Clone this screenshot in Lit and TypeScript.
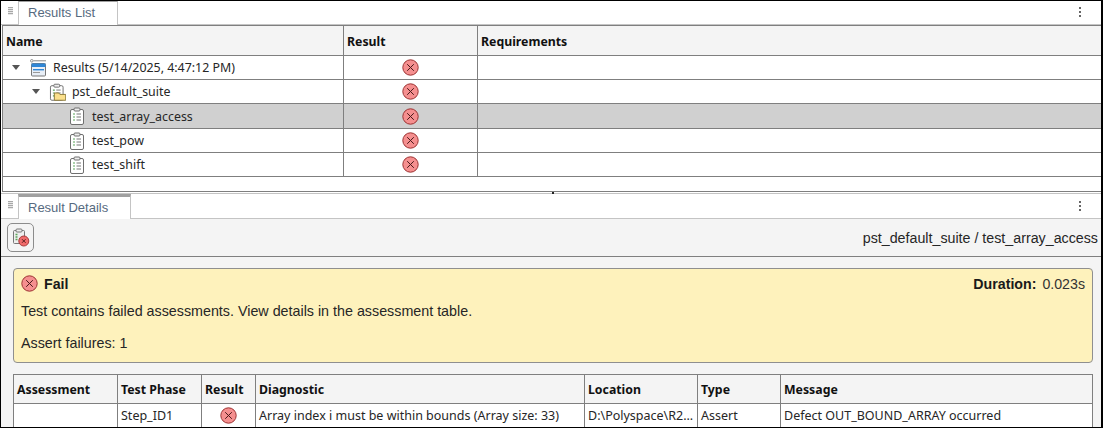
import { LitElement, html, css, svg } from "lit";
import { customElement } from "lit/decorators.js";

const errIcon = (size = 17) => html`<svg class="ic" width=${size} height=${size} viewBox="0 0 17 17">
  <circle cx="8.5" cy="8.5" r="7.7" fill="#f58f8f" stroke="#9c3232" stroke-width="1"/>
  <path d="M5.2 5.2l6.600 6.600M11.800 5.200l-6.600 6.600" stroke="#4a1a1a" stroke-width="1" fill="none"/>
</svg>`;

const clipBody = svg`
  <rect x="1.5" y="2.5" width="13" height="15" rx="1.5" fill="#fff" stroke="#6f6f6f" stroke-width="1"/>
  <rect x="5" y="1" width="6" height="3" rx="1" fill="#eee" stroke="#6f6f6f" stroke-width="1"/>
  <path d="M4 7h2M4 10h2M4 13h2" stroke="#5aa55a" stroke-width="1.2"/>
  <path d="M7.5 7h4.5M7.5 10h4.5M7.5 13h4.5" stroke="#777" stroke-width="1"/>`;

const testIcon = html`<svg class="ic" width="16" height="18" viewBox="0 0 16 18">${clipBody}</svg>`;

const suiteIcon = html`<svg class="ic" width="17" height="18" viewBox="0 0 17.500 18">
  ${clipBody}
  <path d="M5.500 17.500v-7.500h4.500l1.200 1.500h6v6z" fill="#fbe08c" stroke="#8a7a3a" stroke-width="1"/>
</svg>`;

const resultsIcon = html`<svg class="ic" width="17" height="18" viewBox="0 0 17 18">
  <circle cx="1.800" cy="1.800" r="1.300" fill="none" stroke="#777" stroke-width=".8"/>
  <path d="M3.500 1.800h12.500" stroke="#888" stroke-width="1"/>
  <rect x="1.500" y="4.500" width="14" height="12.500" rx="1" fill="#e8eef6" stroke="#777" stroke-width="1"/>
  <rect x="1.500" y="4.500" width="14" height="3.500" fill="#2f86d6"/>
  <rect x="3" y="10" width="11" height="1.400" fill="#2f86d6"/>
  <path d="M3 13.500h7" stroke="#999" stroke-width="1"/>
</svg>`;

const toolbarIcon = html`<svg class="ic" width="18" height="19" viewBox="0 0 18 19">
  <rect x="1.500" y="2.500" width="11" height="13" rx="1" fill="#eee" stroke="#777" stroke-width="1"/>
  <rect x="4" y="1" width="6" height="3" rx="1" fill="#eee" stroke="#777" stroke-width="1"/>
  <path d="M3.500 6.500h2M3.500 9h2M3.500 11.500h2" stroke="#5aa55a" stroke-width="1.400"/>
  <circle cx="11.800" cy="13" r="5" fill="#f06a6a" stroke="#a83a3a" stroke-width="1"/>
  <path d="M10 11.200l3.600 3.600M13.600 11.200l-3.600 3.600" stroke="#5a2020" stroke-width="1"/>
</svg>`;

const arrow = html`<svg class="arrow" width="8" height="5" viewBox="0 0 8 5"><path d="M0 0h8L4 5z" fill="#555"/></svg>`;

const grip = html`<span class="grip"></span>`;
const kebab = html`<span class="kebab"><i></i><i></i><i></i></span>`;

@customElement("app-root")
export class AppRoot extends LitElement {
  static styles = css`
    :host {
      display: flex;
      flex-direction: column;
      width: 1103px;
      height: 428px;
      box-sizing: border-box;
      border: 1px solid #000;
      border-right-width: 2px;
      overflow: hidden;
      background: #fff;
      font-family: "Noto Sans", "Liberation Sans", sans-serif;
      font-size: 12.4px;
      color: #262626;
    }
    .ic { display: block; flex: none; }
    .strip {
      display: flex;
      align-items: flex-end;
      height: 24px;
      flex: none;
      padding-left: 3px;
      border-bottom: 1px solid #c4c4c4;
      box-sizing: border-box;
      font-family: "Liberation Sans", sans-serif;
    }
    .grip {
      width: 5px;
      height: 8px;
      margin: 0 5px 9px 4px;
      flex: none;
      background: repeating-linear-gradient(#a8a8a8 0 1px, #e8e8e8 1px 2px);
    }
    .tab {
      height: 24px;
      box-sizing: border-box;
      border: 1px solid #c4c4c4;
      border-top: 1px solid #a0a0a0;
      border-bottom: none;
      background: #fff;
      color: #566a80;
      font-size: 13px;
      line-height: 21px;
      padding: 0 9px;
      margin-bottom: -1px;
      flex: none;
    }
    .t1 { width: 100px; }
    .t2 { width: 113px; border-top: 3px solid #a0a0a0; height: 25px; line-height: 22px; }
    .kebab {
      display: flex;
      flex-direction: column;
      gap: 2px;
      margin: 0 20px 7px auto;
    }
    .kebab i { width: 2px; height: 2px; background: #666; display: block; }
    .tree {
      flex: none;
      height: 167px;
      margin-left: 1px;
      border: 1px solid #7f7f7f;
      border-right: none;
      box-sizing: border-box;
    }
    .row {
      display: grid;
      grid-template-columns: 341px 134px 1fr;
      height: 24px;
      border-bottom: 1px solid #7f7f7f;
      box-sizing: border-box;
      align-items: stretch;
    }
    .row.head { height: 30px; background: #f4f4f4; font-weight: 700; color: #111; font-size: 12.3px; }
    .row.sel { background: #d0d0d0; height: 25px; }
    .row > div { display: flex; align-items: center; border-right: 1px solid #7f7f7f; min-width: 0; }
    .row > div:last-child { border-right: none; }
    .row.head > div { padding: 1px 0 0 3px; }
    .cc { justify-content: center; }
    .name { gap: 6px; white-space: nowrap; }
    .l0 { padding-left: 9px; }
    .l1 { padding-left: 29px; }
    .l2 { padding-left: 66px; gap: 7px; }
    .l0 .arrow { margin-right: 4px; }
    .l1 .arrow { margin-right: 3px; }
    .split {
      flex: none;
      height: 1px;
      position: relative;
    }
    .split::after {
      content: "";
      position: absolute;
      left: 551px;
      top: 0;
      width: 2px;
      height: 2px;
      background: #222;
    }
    .details {
      flex: 1;
      display: flex;
      flex-direction: column;
      min-height: 0;
      background: #f4f4f4;
    }
    .details .strip { background: #fff; height: 26px; border-top: 1px solid #c4c4c4; }
    .toolbar {
      flex: none;
      height: 38px;
      display: flex;
      align-items: center;
      justify-content: space-between;
      padding: 0 3px 0 6px;
      border-bottom: 1px solid #7f7f7f;
      box-sizing: border-box;
      font-family: "Liberation Sans", sans-serif;
      font-size: 14.25px;
    }
    .tbtn {
      width: 27px;
      height: 29px;
      border: 1px solid #8c8c8c;
      border-radius: 5px;
      box-sizing: border-box;
      display: flex;
      align-items: center;
      justify-content: center;
    }
    .body { flex: 1; padding: 11px 8px 0 12px; display: flex; flex-direction: column; gap: 11px; min-height: 0; overflow: hidden; }
    .banner {
      flex: none;
      height: 95px;
      box-sizing: border-box;
      background: #fef2bc;
      border: 1px solid #8f8f8f;
      border-radius: 4px;
      padding: 6px 7px 0 7px;
      font-family: "Liberation Sans", sans-serif;
      color: #262626;
    }
    .bhead { display: flex; align-items: center; height: 17px; gap: 6px; font-weight: 700; font-size: 14.2px; color: #1a1a1a; }
    .dur { margin-left: auto; }
    .dur span { font-weight: 400; margin-left: 6px; color: #333; }
    .bline { margin: 12px 0 0; line-height: 15px; font-size: 14.3px; }
    .bline.g { margin-top: 17px; }
    .atable { flex: none; border: 1px solid #7f7f7f; box-sizing: border-box; }
    .arow {
      display: grid;
      grid-template-columns: 104px 84px 54px 329px 113px 83px 1fr;
    }
    .arow.h { height: 29px; font-weight: 700; color: #111; border-bottom: 1px solid #7f7f7f; box-sizing: border-box; font-size: 12.3px; }
    .arow.d { height: 23px; background: #fff; font-size: 12.5px; }
    .arow > div {
      display: flex;
      align-items: center;
      padding-left: 3px;
      border-right: 1px solid #7f7f7f;
      white-space: nowrap;
      overflow: hidden;
      min-width: 0;
    }
    .arow > div:last-child { border-right: none; }
    .arow > div.cc { padding-left: 0; }
  `;

  private tree() {
    const rows = [
      { cls: "l0", icon: resultsIcon, arrow: true, label: "Results (5/14/2025, 4:47:12 PM)", sel: false },
      { cls: "l1", icon: suiteIcon, arrow: true, label: "pst_default_suite", sel: false },
      { cls: "l2", icon: testIcon, arrow: false, label: "test_array_access", sel: true },
      { cls: "l2", icon: testIcon, arrow: false, label: "test_pow", sel: false },
      { cls: "l2", icon: testIcon, arrow: false, label: "test_shift", sel: false },
    ];
    return rows.map(
      (r) => html`<div class="row ${r.sel ? "sel" : ""}">
        <div class="name ${r.cls}">${r.arrow ? arrow : ""}${r.icon}<span>${r.label}</span></div>
        <div class="cc">${errIcon()}</div>
        <div></div>
      </div>`
    );
  }

  render() {
    return html`
      <div class="strip">${grip}<div class="tab t1">Results List</div>${kebab}</div>
      <div class="tree">
        <div class="row head"><div>Name</div><div>Result</div><div>Requirements</div></div>
        ${this.tree()}
      </div>
      <div class="split"></div>
      <div class="details">
        <div class="strip">${grip}<div class="tab t2">Result Details</div>${kebab}</div>
        <div class="toolbar">
          <div class="tbtn">${toolbarIcon}</div>
          <div>pst_default_suite / test_array_access</div>
        </div>
        <div class="body">
          <div class="banner">
            <div class="bhead">${errIcon()}<span>Fail</span><div class="dur">Duration:<span>0.023s</span></div></div>
            <p class="bline">Test contains failed assessments. View details in the assessment table.</p>
            <p class="bline g">Assert failures: 1</p>
          </div>
          <div class="atable">
            <div class="arow h">
              <div>Assessment</div><div>Test Phase</div><div>Result</div><div>Diagnostic</div><div>Location</div><div>Type</div><div>Message</div>
            </div>
            <div class="arow d">
              <div></div><div>Step_ID1</div><div class="cc">${errIcon()}</div>
              <div>Array index i must be within bounds (Array size: 33)</div>
              <div>D:\\Polyspace\\R2...</div><div>Assert</div><div>Defect OUT_BOUND_ARRAY occurred</div>
            </div>
          </div>
        </div>
      </div>
    `;
  }
}
